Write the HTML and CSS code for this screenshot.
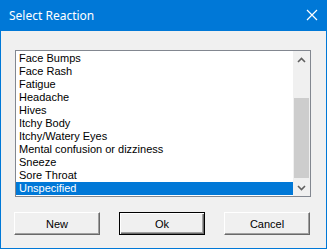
FILE: index.html
```html
<!DOCTYPE html>
<html lang="en">

<head>
    <meta charset="UTF-8">
    <meta name="viewport" content="width=device-width, initial-scale=1.0">
    <title>Select Reaction</title>
    <link rel="stylesheet" href="styles.css">
</head>

<body>
    <div class="dialog">
        <header class="titlebar">
            <span class="title">Select Reaction</span>
            <svg class="close" width="12" height="12" viewBox="0 0 12 12">
                <path d="M1 1 L11 11 M11 1 L1 11" stroke="#ffffff" stroke-width="1.2" fill="none" />
            </svg>
        </header>

        <main class="content">
            <div class="listbox">
                <ul class="items">
                    <li>Face Bumps</li>
                    <li>Face Rash</li>
                    <li>Fatigue</li>
                    <li>Headache</li>
                    <li>Hives</li>
                    <li>Itchy Body</li>
                    <li>Itchy/Watery Eyes</li>
                    <li>Mental confusion or dizziness</li>
                    <li>Sneeze</li>
                    <li>Sore Throat</li>
                    <li class="selected">Unspecified</li>
                </ul>
                <div class="scrollbar">
                    <div class="arrow">
                        <svg width="9" height="6" viewBox="0 0 9 6">
                            <path d="M1 5 L4.5 1.5 L8 5" stroke="#606060" stroke-width="1.6" fill="none" />
                        </svg>
                    </div>
                    <div class="track">
                        <div class="thumb"></div>
                    </div>
                    <div class="arrow">
                        <svg width="9" height="6" viewBox="0 0 9 6">
                            <path d="M1 1 L4.5 4.5 L8 1" stroke="#606060" stroke-width="1.6" fill="none" />
                        </svg>
                    </div>
                </div>
            </div>

            <div class="buttons">
                <button class="btn">New</button>
                <button class="btn default">Ok</button>
                <button class="btn">Cancel</button>
            </div>
        </main>
    </div>
</body>

</html>
```

FILE: styles.css
```css
* {
    margin: 0;
    padding: 0;
    box-sizing: border-box;
}

body {
    font-family: "Liberation Sans", Arial, sans-serif;
    background: #f0f0f0;
}

.dialog {
    width: 327px;
    height: 249px;
    border: 1px solid #0078d7;
    border-top: none;
    background: #f0f0f0;
}

.titlebar {
    height: 31px;
    margin: 0 -1px;
    background: #0078d7;
    display: flex;
    align-items: center;
    justify-content: space-between;
    padding: 0 10px 1px 9px;
}

.title {
    font-family: "Noto Sans", "Open Sans", sans-serif;
    font-size: 12px;
    color: #ffffff;
}

.close {
    margin-right: -1px;
}

.content {
    padding: 19px 15px 0 13px;
}

.listbox {
    margin-left: 1px;
    width: 296px;
    height: 147px;
    border: 1px solid #828790;
    background: #ffffff;
    display: flex;
}

.items {
    list-style: none;
    flex: 1;
    padding-top: 1px;
    font-size: 11px;
    color: #000000;
}

.items li {
    height: 13px;
    line-height: 13px;
    padding-left: 3px;
    white-space: nowrap;
}

.items li.selected {
    background: #0078d7;
    color: #ffffff;
}

.scrollbar {
    width: 17px;
    background: #f0f0f0;
    display: flex;
    flex-direction: column;
}

.arrow {
    height: 17px;
    display: flex;
    align-items: center;
    justify-content: center;
}

.track {
    flex: 1;
    display: flex;
    flex-direction: column;
    justify-content: flex-end;
}

.thumb {
    height: 80px;
    margin: 0 1px 1px;
    background: #cdcdcd;
}

.buttons {
    display: flex;
    gap: 19px;
    margin-top: 15px;
}

.btn {
    width: 86px;
    height: 23px;
    font-family: "Liberation Sans", Arial, sans-serif;
    font-size: 11px;
    color: #000000;
    background: #f0f0f0;
    border: 1px solid;
    border-color: #ffffff #696969 #696969 #ffffff;
    box-shadow: inset -1px -1px 0 #a0a0a0;
}

.btn.default {
    border: 1px solid #000000;
    box-shadow: inset 1px 1px 0 #ffffff, inset -1px -1px 0 #696969, inset -2px -2px 0 #a0a0a0;
}
```
